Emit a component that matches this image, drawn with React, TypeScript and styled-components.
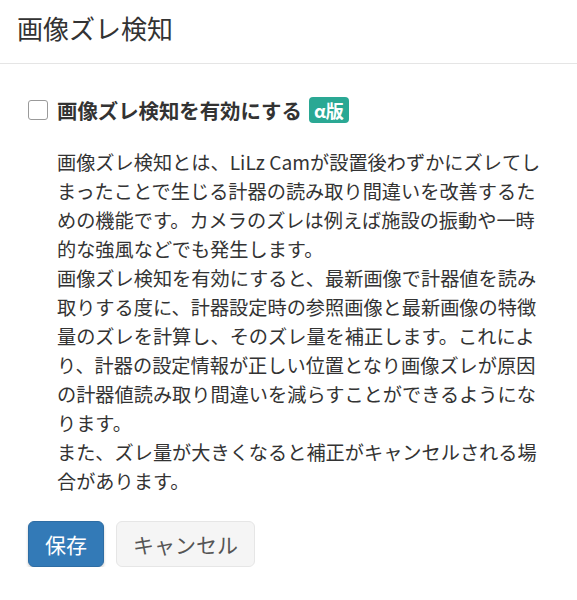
import React from "react";
import styled, { createGlobalStyle } from "styled-components";

const Global = createGlobalStyle`
  body {
    margin: 0;
    background: #fff;
    font-family: "Noto Sans CJK JP", "Noto Sans", sans-serif;
    color: #333;
  }
`;

const Modal = styled.div`
  width: 577px;
`;

const Header = styled.div`
  height: 64px;
  border-bottom: 1px solid #e5e5e5;
  display: flex;
  align-items: center;
  padding: 0 17px;
  box-sizing: border-box;
`;

const Title = styled.h4`
  margin: 0;
  font-size: 26px;
  font-weight: 400;
  line-height: 1;
  color: #333;
  position: relative;
  top: -4px;
`;

const Body = styled.div`
  padding: 33px 28px 0 28px;
`;

const CheckRow = styled.label`
  display: flex;
  align-items: center;
  gap: 9px;
`;

const Box = styled.span`
  width: 18px;
  height: 18px;
  border: 1px solid #9a9a9a;
  border-radius: 3px;
  background: #fff;
  flex: none;
`;

const LabelText = styled.span`
  font-size: 20.4px;
  font-weight: 700;
  color: #333;
  line-height: 26px;
`;

const Badge = styled.span`
  background: #2aa894;
  color: #fff;
  font-size: 18px;
  font-weight: 700;
  border-radius: 4px;
  padding: 0 5px;
  height: 26px;
  line-height: 26px;
  display: inline-flex;
  align-items: center;
  margin-left: -2px;
`;

const Desc = styled.p`
  margin: 25px 0 0 29px;
  font-size: 19.2px;
  line-height: 29px;
  color: #333;
  white-space: nowrap;
`;

const Footer = styled.div`
  display: flex;
  gap: 12px;
  padding: 25px 28px 0;
`;

const Button = styled.button<{ $primary?: boolean }>`
  height: 46px;
  border-radius: 6px;
  font-family: "Noto Sans CJK JP", sans-serif;
  font-size: 21px;
  padding: 0 16px;
  cursor: pointer;
  background: ${(p) => (p.$primary ? "#337ab7" : "#f5f5f5")};
  color: ${(p) => (p.$primary ? "#fff" : "#555")};
  border: 1px solid ${(p) => (p.$primary ? "#2e6da4" : "#e6e6e6")};
  box-shadow: ${(p) => (p.$primary ? "0 2px 3px rgba(0,0,0,0.2)" : "none")};
`;

export default function App() {
  return (
    <Modal>
      <Global />
      <Header>
        <Title>画像ズレ検知</Title>
      </Header>
      <Body>
        <CheckRow>
          <Box />
          <LabelText>画像ズレ検知を有効にする</LabelText>
          <Badge>α版</Badge>
        </CheckRow>
        <Desc>
          画像ズレ検知とは、LiLz Camが設置後わずかにズレてし
          <br />
          まったことで生じる計器の読み取り間違いを改善するた
          <br />
          めの機能です。カメラのズレは例えば施設の振動や一時
          <br />
          的な強風などでも発生します。
          <br />
          画像ズレ検知を有効にすると、最新画像で計器値を読み
          <br />
          取りする度に、計器設定時の参照画像と最新画像の特徴
          <br />
          量のズレを計算し、そのズレ量を補正します。これによ
          <br />
          り、計器の設定情報が正しい位置となり画像ズレが原因
          <br />
          の計器値読み取り間違いを減らすことができるようにな
          <br />
          ります。
          <br />
          また、ズレ量が大きくなると補正がキャンセルされる場
          <br />
          合があります。
        </Desc>
      </Body>
      <Footer>
        <Button $primary>保存</Button>
        <Button>キャンセル</Button>
      </Footer>
    </Modal>
  );
}
